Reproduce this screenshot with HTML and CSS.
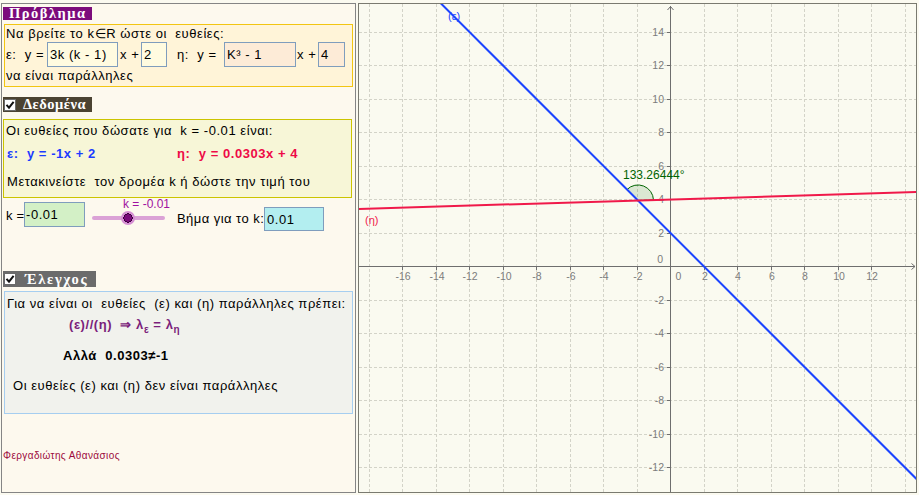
FILE: index.html
```html
<!DOCTYPE html>
<html lang="el">
<head>
<meta charset="utf-8">
<title>Παράλληλες ευθείες</title>
<link rel="stylesheet" href="styles.css">
</head>
<body>
<div class="app">
  <div class="left">
    <div class="hdr hdr-problem">Πρόβλημα</div>
    <div class="box box-problem">
      <div class="line">Να βρείτε το k∈R ώστε οι  ευθείες:</div>
      <div class="eqrow">
        <span class="t1">ε:  y =</span>
        <span class="inp in-yellow in1">3k (k - 1)</span>
        <span class="t2">x +</span>
        <span class="inp in-yellow in2">2</span>
        <span class="t3">η:  y =</span>
        <span class="inp in-peach in3">K³ - 1</span>
        <span class="t4">x +</span>
        <span class="inp in-peach in4">4</span>
      </div>
      <div class="line">να είναι παράλληλες</div>
    </div>

    <div class="hdr hdr-data">
      <svg class="cb" width="12" height="12" viewBox="0 0 12 12"><rect x="0.5" y="0.5" width="11" height="11" fill="#fff" stroke="#6a6a6a"/><path d="M2.5 5.8 L5 8.6 L9.6 2.8" fill="none" stroke="#111" stroke-width="2"/></svg>
      <span class="hdr-text">Δεδομένα</span>
    </div>
    <div class="box box-data">
      <div class="line d1">Οι ευθείες που δώσατε για  k = -0.01 είναι:</div>
      <div class="line d2"><span class="eq-e">ε:  y = -1x + 2</span><span class="eq-h">η:  y = 0.0303x + 4</span></div>
      <div class="line d3">Μετακινείστε  τον δρομέα k ή δώστε την τιμή του</div>
    </div>

    <div class="krow">
      <span class="klabel">k =</span>
      <span class="inp kin">-0.01</span>
      <div class="slider">
        <span class="slider-label">k = -0.01</span>
        <span class="track"></span>
        <span class="knob"></span>
      </div>
      <span class="steplabel">Βήμα για το k:</span>
      <span class="inp stepin">0.01</span>
    </div>

    <div class="hdr hdr-check">
      <svg class="cb" width="12" height="12" viewBox="0 0 12 12"><rect x="0.5" y="0.5" width="11" height="11" fill="#fff" stroke="#6a6a6a"/><path d="M2.5 5.8 L5 8.6 L9.6 2.8" fill="none" stroke="#111" stroke-width="2"/></svg>
      <span class="hdr-text">Έλεγχος</span>
    </div>
    <div class="box box-check">
      <div class="line c1">Για να είναι οι  ευθείες  (ε) και (η) παράλληλες πρέπει:</div>
      <div class="line c2">(ε)//(η)  ⇒ λ<sub>ε</sub> = λ<sub>η</sub></div>
      <div class="line c3">Αλλά  0.0303≠-1</div>
      <div class="line c4">Οι ευθείες (ε) και (η) δεν είναι παράλληλες</div>
    </div>

    <div class="author">Φεργαδιώτης Αθανάσιος</div>
  </div>

  <div class="graph">
    <svg width="557" height="488" viewBox="0 0 557 488">
      <path class="grid" d="M10.5 0V488M43.5 0V488M77.5 0V488M110.5 0V488M144.5 0V488M177.5 0V488M211.5 0V488M244.5 0V488M278.5 0V488M345.5 0V488M378.5 0V488M412.5 0V488M445.5 0V488M479.5 0V488M512.5 0V488M546.5 0V488M0 28.5H557M0 61.5H557M0 95.5H557M0 128.5H557M0 162.5H557M0 195.5H557M0 229.5H557M0 296.5H557M0 329.5H557M0 363.5H557M0 396.5H557M0 430.5H557M0 463.5H557"/>
      <path class="axis" d="M311.5 2V488M0 262.5H556"/>
      <path class="axis" d="M308.5 6L311.5 2.5L314.5 6M552.5 259.5L556 262.5L552.5 265.5"/>
      <path class="axis" d="M308 28.5H311.5M308 61.5H311.5M308 95.5H311.5M308 128.5H311.5M308 162.5H311.5M308 195.5H311.5M308 229.5H311.5M308 296.5H311.5M308 329.5H311.5M308 363.5H311.5M308 396.5H311.5M308 430.5H311.5M308 463.5H311.5M43.5 262.5V266M77.5 262.5V266M110.5 262.5V266M144.5 262.5V266M177.5 262.5V266M211.5 262.5V266M244.5 262.5V266M278.5 262.5V266M345.5 262.5V266M378.5 262.5V266M412.5 262.5V266M445.5 262.5V266M479.5 262.5V266M512.5 262.5V266"/>
      <g class="ylab">
        <text x="305" y="32">14</text>
        <text x="305" y="65">12</text>
        <text x="305" y="99">10</text>
        <text x="305" y="132">8</text>
        <text x="305" y="165.5">6</text>
        <text x="305" y="199">4</text>
        <text x="305" y="233">2</text>
        <text x="304" y="259">0</text>
        <text x="305" y="300">-2</text>
        <text x="305" y="333">-4</text>
        <text x="305" y="367">-6</text>
        <text x="305" y="400">-8</text>
        <text x="305" y="434">-10</text>
        <text x="305" y="467">-12</text>
      </g>
      <g class="xlab">
        <text x="44" y="276">-16</text>
        <text x="78" y="276">-14</text>
        <text x="111" y="276">-12</text>
        <text x="145" y="276">-10</text>
        <text x="178" y="276">-8</text>
        <text x="212" y="276">-6</text>
        <text x="245" y="276">-4</text>
        <text x="279" y="276">-2</text>
        <text x="319.5" y="276">0</text>
        <text x="346" y="276">2</text>
        <text x="379" y="276">4</text>
        <text x="413" y="276">6</text>
        <text x="446" y="276">8</text>
        <text x="480" y="276">10</text>
        <text x="513" y="276">12</text>
      </g>
      <path class="sector" d="M278.98 196.48L294.48 196.02A15.5 15.5 0 0 0 268.02 185.52Z"/>
      <text class="anglab" x="264" y="175.3">133.26444°</text>
      <line class="line-e" x1="70" y1="-12.5" x2="600" y2="517.5"/>
      <line class="line-h" x1="-10" y1="205.24" x2="570" y2="187.67"/>
      <text class="lab-e" x="89" y="15.5">(ε)</text>
      <text class="lab-h" x="6" y="219.7">(η)</text>
    </svg>
  </div>
</div>
</body>
</html>
```

FILE: styles.css
```css
* { box-sizing: border-box; }

body {
  margin: 0;
  background: #fbfaf0;
  font-family: "Liberation Sans", Arial, sans-serif;
  font-size: 13px;
  letter-spacing: 0.55px;
  color: #000;
}

.app {
  display: flex;
  gap: 2px;
  padding: 3px 0 0 1px;
}

.left {
  width: 355px;
  height: 490px;
  border: 1px solid #858585;
  background: #fdf9ee;
}

.graph {
  width: 559px;
  height: 490px;
  border: 1px solid #7a7a70;
  background: #fafaf0;
  letter-spacing: 0;
}

.graph svg { display: block; }

/* headers */
.hdr {
  display: flex;
  align-items: center;
  color: #fff;
  font-family: "Liberation Serif", "Times New Roman", serif;
  font-weight: bold;
  font-size: 14.5px;
  line-height: 13px;
  margin-left: 1px;
  white-space: nowrap;
}
.hdr-problem {
  margin-top: 3px;
  width: 89px;
  height: 13px;
  padding-left: 6px;
  letter-spacing: 1.5px;
  background: #7c0c7c;
}
.hdr-data {
  margin-top: 10px;
  width: 89px;
  height: 15px;
  letter-spacing: 0.5px;
  background: #4b4332;
}
.hdr-check {
  margin-top: 39px;
  width: 93px;
  height: 16px;
  letter-spacing: 1.7px;
  background: #6b6b6b;
}
.cb { display: block; margin-left: 1px; flex: none; }
.hdr-data .hdr-text { margin-left: 7px; }
.hdr-check .hdr-text { margin-left: 9px; }

/* boxes */
.box {
  width: 349px;
}
.line {
  height: 17px;
  line-height: 17px;
  white-space: pre;
}

.box-problem {
  margin: 4px 0 0 2px;
  height: 63px;
  border: 1px solid #f2c512;
  background: #fff4d8;
  padding-left: 1px;
}
.eqrow {
  display: flex;
  align-items: center;
  height: 25px;
  white-space: pre;
}
.t1 { width: 41px; }
.t2 { width: 23px; padding-left: 2px; }
.t3 { width: 57px; padding-left: 10px; }
.t4 { width: 22px; padding-left: 1px; }

.inp {
  display: flex;
  align-items: center;
  height: 25px;
  border: 1px solid #7f9dbd;
  padding-left: 2px;
  white-space: pre;
  flex: none;
}
.in-yellow { background: #fffbe0; }
.in-peach { background: #fdebd7; }
.in1 { width: 71px; }
.in2 { width: 26px; }
.in3 { width: 72px; }
.in4 { width: 27px; }

.box-data {
  margin: 7px 0 0 1px;
  height: 79px;
  border: 1px solid #cbc400;
  background: #f7f6d7;
  padding: 2px 0 0 2px;
}
.d2 {
  margin-top: 6px;
  margin-left: 1px;
  display: flex;
  font-weight: bold;
}
.eq-e { width: 170px; color: #1c3cff; }
.eq-h { color: #ee0a46; }
.d3 { margin-top: 11px; margin-left: 1px; }

/* slider row */
.krow {
  display: flex;
  align-items: flex-start;
  height: 34px;
  padding-left: 4px;
}
.klabel {
  width: 18px;
  margin-top: 10px;
  line-height: 15px;
  white-space: pre;
  letter-spacing: 0.2px;
}
.kin {
  width: 61px;
  margin-top: 4px;
  background: #d3f0c6;
  padding-left: 1px;
}
.slider {
  position: relative;
  width: 92px;
  height: 34px;
  flex: none;
}
.track {
  position: absolute;
  left: 7px;
  top: 18px;
  width: 73px;
  height: 4px;
  border-radius: 2px;
  background: #dba2d6;
}
.knob {
  position: absolute;
  left: 36px;
  top: 13px;
  width: 14px;
  height: 14px;
  border-radius: 50%;
  background: radial-gradient(circle, #7a0a7a 0 3.6px, #3d003d 3.7px 4.6px, #d58fd2 4.7px 7px);
}
.slider-label {
  position: absolute;
  left: 38px;
  top: 0;
  font-size: 12px;
  line-height: 12px;
  letter-spacing: 0;
  color: #a012a0;
  white-space: pre;
}
.steplabel {
  width: 87px;
  margin-top: 13px;
  line-height: 15px;
  white-space: nowrap;
  letter-spacing: 0.45px;
}
.stepin {
  width: 60px;
  height: 24px;
  margin-top: 9px;
  background: #b3eef0;
}

/* check box */
.box-check {
  margin: 4px 0 0 2px;
  height: 123px;
  border: 1px solid #a6cef0;
  background: #f1f2ed;
  padding: 3px 0 0 2px;
}
.c2 {
  margin-top: 4px;
  margin-left: 62px;
  font-weight: bold;
  color: #7b1e7b;
}
.c2 sub {
  font-size: 10px;
  line-height: 0;
  vertical-align: -4px;
}
.c3 {
  margin-top: 13.5px;
  margin-left: 56px;
  font-weight: bold;
}
.c4 {
  margin-top: 13px;
  margin-left: 6px;
}

.author {
  margin: 36px 0 0 1px;
  font-size: 10px;
  line-height: 12px;
  letter-spacing: 0.4px;
  color: #9c0a3c;
}

/* graph */
.grid {
  fill: none;
  stroke: #d3d3c8;
  stroke-width: 1;
  stroke-dasharray: 3 2;
}
.axis {
  fill: none;
  stroke: #6e6e6e;
  stroke-width: 1;
}
.ylab text, .xlab text {
  font-family: "Liberation Sans", Arial, sans-serif;
  font-size: 10.5px;
  fill: #7c7c7c;
}
.ylab text { text-anchor: end; }
.xlab text { text-anchor: middle; }
.sector {
  fill: rgba(0, 100, 0, 0.12);
  stroke: #006400;
  stroke-width: 1;
}
.anglab {
  font-family: "Liberation Sans", Arial, sans-serif;
  font-size: 12px;
  fill: #006400;
}
.line-e { stroke: #1c44ff; stroke-width: 2; }
.line-h { stroke: #f0194a; stroke-width: 2; }
.lab-e, .lab-h {
  font-family: "Liberation Sans", Arial, sans-serif;
  font-size: 11px;
}
.lab-e { fill: #1c44ff; }
.lab-h { fill: #f0194a; }
```
